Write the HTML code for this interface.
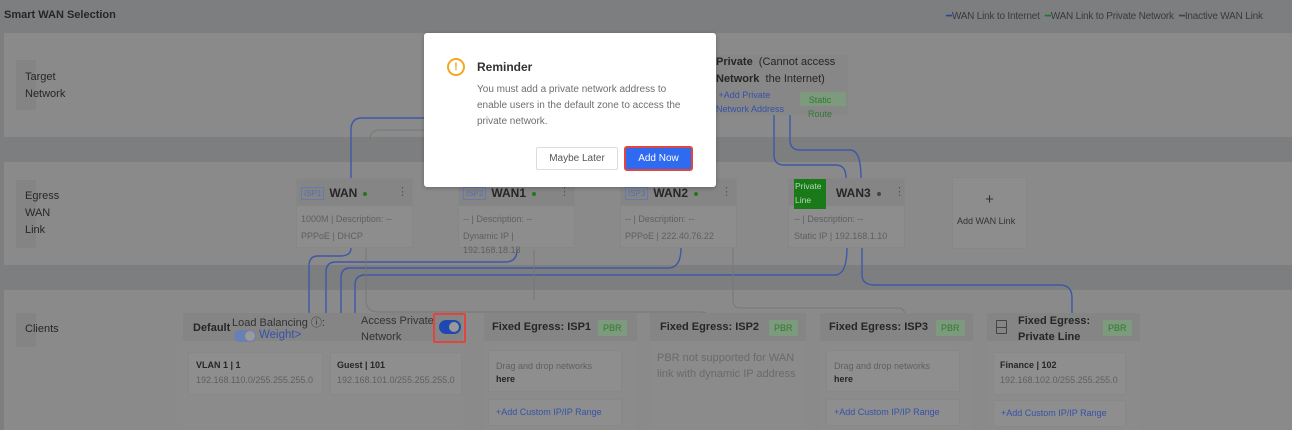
<!DOCTYPE html>
<html><head><meta charset="utf-8"><style>
*{margin:0;padding:0;box-sizing:border-box}
body{width:1292px;height:430px;overflow:hidden;background:#7d7e80;font-family:"Liberation Sans",sans-serif;position:relative;color:#2a2a2a}
.a{position:absolute}
.panel{position:absolute;left:4px;right:0;background:#8a8a8b}
.lab{position:absolute;left:16px;width:20px;background:#848485}
.lt{position:absolute;left:25px;font-size:11px;color:#262626;line-height:17px}
.card{position:absolute;background:#8d8d8e;border:1px solid #878788}
.ch{position:absolute;left:0;right:0;top:0;height:27px;background:#858586}
.t{font-size:12px;font-weight:bold;color:#262626;white-space:nowrap}
.s{font-size:9px;color:#5f5f60;white-space:nowrap}
.isp{display:inline-block;border:1px solid #6479b0;color:#5a6fa8;font-size:8px;padding:1px 2px;margin-right:5px;vertical-align:middle;font-weight:normal}
.dot{display:inline-block;width:4px;height:4px;border-radius:2px;background:#1f7a1f;margin-left:6px;vertical-align:middle}
.pbr{position:absolute;background:#7e9a7e;color:#2e7a2e;font-size:9px;padding:3px 5px}
.box{position:absolute;background:#8e8e8f;border:1px solid #888889}
.blue{color:#3552a8}
</style></head><body>
<div class="a t" style="left:4px;top:9px;font-size:11px">Smart WAN Selection</div>
<div class="a s" style="left:946px;top:11px;font-size:10px;color:#3a3a3a;letter-spacing:-0.2px"><span style="color:#2b45a0">━</span>WAN Link to Internet &nbsp;<span style="color:#1e7a1e">━</span>WAN Link to Private Network &nbsp;<span style="color:#444">━</span>Inactive WAN Link</div>

<div class="panel" style="top:33px;height:104px"></div>
<div class="lab" style="top:60px;height:50px"></div>
<div class="lt" style="top:69px">Target<br>Network</div>
<div class="panel" style="top:162px;height:103px"></div>
<div class="lab" style="top:180px;height:68px"></div>
<div class="lt" style="top:188px">Egress<br>WAN<br>Link</div>
<div class="panel" style="top:290px;height:140px"></div>
<div class="lab" style="top:313px;height:34px"></div>
<div class="lt" style="top:321px">Clients</div>

<div class="a" style="left:710px;top:55px;width:138px;height:60px;background:#878788"></div>
<div class="a t" style="left:716px;top:54px;font-size:11px;line-height:17px">Private <span style="font-weight:normal">&nbsp;(Cannot access</span><br>Network <span style="font-weight:normal">&nbsp;the Internet)</span></div>
<div class="a blue" style="left:716px;top:88px;font-size:9px;line-height:14px">&nbsp;+Add Private<br>Network Address</div>
<div class="a" style="left:800px;top:92px;width:46px;height:14px;background:#7e9a7e"></div>
<div class="a" style="left:808px;top:93px;font-size:9px;color:#2e7a2e;line-height:14px;text-align:center">Static<br>Route</div>

<svg class="a" style="left:0;top:0" width="1292" height="430" fill="none">
<g stroke="#3e58a6" stroke-width="1.4">
<path d="M424 118 H362 Q351 118 351 130 V178"/>
<path d="M351 248 Q351 256 340 256 H318 Q309 256 309 266 V315"/>
<path d="M517 250 Q517 262 505 262 H336 Q326 262 326 272 V315"/>
<path d="M681 248 Q681 268 668 268 H350 Q341 268 341 278 V315"/>
<path d="M847 247 Q847 275 835 275 H365 Q355 275 355 285 V315"/>
<path d="M862 248 V275 Q862 285 875 285 H1060 Q1072 285 1072 298 V316"/>
<path d="M774 115 V155 Q774 165 784 165 H836 Q846 165 846 178"/>
<path d="M790 115 V140 Q790 150 800 150 H850 Q861 150 861 178"/>
</g>
<g stroke="#777" stroke-width="1">
<path d="M366 220 V300 Q366 312 378 312 H700 Q710 312 710 320"/>
<path d="M370 140 Q370 130 380 130 H424"/>
<path d="M534 250 V300"/><path d="M733 248 V300 Q733 308 740 308 H898 Q905 308 905 316"/>
</g>
</svg>

<div class="card" style="left:296px;top:178px;width:117px;height:70px"><div class="ch"></div>
<div class="a t" style="left:4px;top:7px"><span class="isp">ISP1</span>WAN<span class="dot"></span></div>
<div class="a s" style="left:100px;top:6px;font-size:11px;color:#555">⋮</div>
<div class="a s" style="left:4px;top:35px">1000M | Description: --</div>
<div class="a s" style="left:4px;top:52px">PPPoE | DHCP</div></div>
<div class="card" style="left:458px;top:178px;width:117px;height:70px"><div class="ch"></div>
<div class="a t" style="left:4px;top:7px"><span class="isp">ISP2</span>WAN1<span class="dot"></span></div>
<div class="a s" style="left:100px;top:6px;font-size:11px;color:#555">⋮</div>
<div class="a s" style="left:4px;top:35px">-- | Description: --</div>
<div class="a s" style="left:4px;line-height:14px;top:50px">Dynamic IP |<br>192.168.18.18</div></div>
<div class="card" style="left:620px;top:178px;width:117px;height:70px"><div class="ch"></div>
<div class="a t" style="left:4px;top:7px"><span class="isp">ISP3</span>WAN2<span class="dot"></span></div>
<div class="a s" style="left:100px;top:6px;font-size:11px;color:#555">⋮</div>
<div class="a s" style="left:4px;top:35px">-- | Description: --</div>
<div class="a s" style="left:4px;top:52px">PPPoE | 222.40.76.22</div></div>
<div class="card" style="left:788px;top:178px;width:117px;height:70px"><div class="ch"></div>
<div class="a" style="left:5px;top:0;width:32px;height:30px;background:#1a7a1a;color:#b8d8b8;font-size:8.5px;line-height:14px;padding-left:1px">Private<br>Line</div>
<div class="a t" style="left:47px;top:7px">WAN3<span class="dot" style="background:#444"></span></div>
<div class="a s" style="left:105px;top:6px;font-size:11px;color:#555">⋮</div>
<div class="a s" style="left:5px;top:35px">-- | Description: --</div>
<div class="a s" style="left:5px;top:52px">Static IP | 192.168.1.10</div></div>
<div class="card" style="left:952px;top:177px;width:75px;height:72px">
<div class="a" style="left:0;right:0;top:13px;text-align:center;font-size:15px;color:#333">+</div>
<div class="a s" style="left:4px;top:38px;color:#333">Add WAN Link</div></div>

<div class="a" style="left:183px;top:313px;width:280px;height:117px;background:#8b8b8c"></div>
<div class="a" style="left:183px;top:313px;width:280px;height:28px;background:#858586"></div>
<div class="a t" style="left:193px;top:322px;font-size:11px">Default</div>
<div class="a" style="left:232px;top:314px;font-size:11px;color:#333;white-space:nowrap">Load Balancing ⓘ:</div>
<div class="a" style="left:234px;top:330px;width:22px;height:12px;border-radius:6px;background:#6b7fb0"></div>
<div class="a" style="left:245px;top:331px;width:10px;height:10px;border-radius:5px;background:#9a9a9a"></div>
<div class="a blue" style="left:259px;top:329px;font-size:11.5px">Weight&gt;</div>
<div class="a" style="left:361px;top:313px;font-size:11px;color:#333;line-height:16px">Access Private<br>Network</div>
<div class="a" style="left:433px;top:313px;width:33px;height:30px;border:2px solid #e0453f;border-radius:2px"></div>
<div class="a" style="left:439px;top:320px;width:22px;height:14px;border-radius:7px;background:#1f48b0"></div>
<div class="a" style="left:449px;top:322px;width:10px;height:10px;border-radius:5px;background:#999"></div>
<div class="box" style="left:188px;top:352px;width:135px;height:43px"></div>
<div class="a t" style="left:196px;top:360px;font-size:9px">VLAN 1 | 1</div>
<div class="a s" style="left:196px;top:375px">192.168.110.0/255.255.255.0</div>
<div class="box" style="left:330px;top:352px;width:132px;height:43px"></div>
<div class="a t" style="left:337px;top:360px;font-size:9px">Guest | 101</div>
<div class="a s" style="left:337px;top:375px">192.168.101.0/255.255.255.0</div>

<div class="a" style="left:484px;top:313px;width:153px;height:117px;background:#8b8b8c"></div>
<div class="a" style="left:484px;top:313px;width:153px;height:28px;background:#858586"></div>
<div class="a t" style="left:492px;top:321px;font-size:11px">Fixed Egress: ISP1</div>
<div class="pbr" style="left:598px;top:320px">PBR</div>
<div class="box" style="left:488px;top:350px;width:134px;height:42px"></div>
<div class="a s" style="left:496px;top:361px">Drag and drop networks</div>
<div class="a t" style="left:496px;top:374px;font-size:9px">here</div>
<div class="box" style="left:488px;top:399px;width:134px;height:27px"></div>
<div class="a blue" style="left:496px;top:407px;font-size:9px">+Add Custom IP/IP Range</div>

<div class="a" style="left:650px;top:313px;width:156px;height:117px;background:#8b8b8c"></div>
<div class="a" style="left:650px;top:313px;width:156px;height:28px;background:#858586"></div>
<div class="a t" style="left:660px;top:321px;font-size:11px">Fixed Egress: ISP2</div>
<div class="pbr" style="left:769px;top:320px">PBR</div>
<div class="a" style="left:657px;top:350px;font-size:11px;color:#6a6a6b;line-height:16px">PBR not supported for WAN<br>link with dynamic IP address</div>

<div class="a" style="left:820px;top:313px;width:153px;height:117px;background:#8b8b8c"></div>
<div class="a" style="left:820px;top:313px;width:153px;height:28px;background:#858586"></div>
<div class="a t" style="left:829px;top:321px;font-size:11px">Fixed Egress: ISP3</div>
<div class="pbr" style="left:936px;top:320px">PBR</div>
<div class="box" style="left:826px;top:350px;width:134px;height:42px"></div>
<div class="a s" style="left:834px;top:361px">Drag and drop networks</div>
<div class="a t" style="left:834px;top:374px;font-size:9px">here</div>
<div class="box" style="left:826px;top:399px;width:134px;height:27px"></div>
<div class="a blue" style="left:834px;top:407px;font-size:9px">+Add Custom IP/IP Range</div>

<div class="a" style="left:987px;top:313px;width:153px;height:117px;background:#8b8b8c"></div>
<div class="a" style="left:987px;top:313px;width:153px;height:28px;background:#858586"></div>
<div class="a" style="left:996px;top:320px;width:11px;height:14px;border:1px solid #444;border-radius:1px"></div>
<div class="a" style="left:996px;top:327px;width:11px;height:1px;background:#444"></div>
<div class="a t" style="left:1018px;top:313px;font-size:11px;line-height:16px">Fixed Egress:<br>Private Line</div>
<div class="pbr" style="left:1103px;top:320px">PBR</div>
<div class="box" style="left:993px;top:352px;width:133px;height:43px"></div>
<div class="a t" style="left:1000px;top:360px;font-size:9px">Finance | 102</div>
<div class="a s" style="left:1000px;top:375px">192.168.102.0/255.255.255.0</div>
<div class="box" style="left:993px;top:400px;width:133px;height:27px"></div>
<div class="a blue" style="left:1001px;top:408px;font-size:9px">+Add Custom IP/IP Range</div>

<div class="a" style="left:424px;top:33px;width:292px;height:154px;background:#fff;border-radius:3px;box-shadow:0 1px 4px rgba(0,0,0,.25)"></div>
<div class="a" style="left:447px;top:58px;width:18px;height:18px;border:2px solid #f5a623;border-radius:50%;color:#f5a623;font-size:11px;font-weight:bold;text-align:center;line-height:14px">!</div>
<div class="a" style="left:477px;top:60px;font-size:12px;font-weight:bold;color:#333">Reminder</div>
<div class="a" style="left:477px;top:82px;font-size:10px;color:#6e6e6e;line-height:16px">You must add a private network address to<br>enable users in the default zone to access the<br>private network.</div>
<div class="a" style="left:536px;top:147px;width:82px;height:23px;border:1px solid #dcdcdc;border-radius:2px;font-size:10px;color:#555;text-align:center;line-height:21px">Maybe Later</div>
<div class="a" style="left:624px;top:146px;width:69px;height:25px;border:2px solid #e0453f;border-radius:3px;background:#2f6bf0;font-size:10px;color:#fff;text-align:center;line-height:21px">Add Now</div>
</body></html>
